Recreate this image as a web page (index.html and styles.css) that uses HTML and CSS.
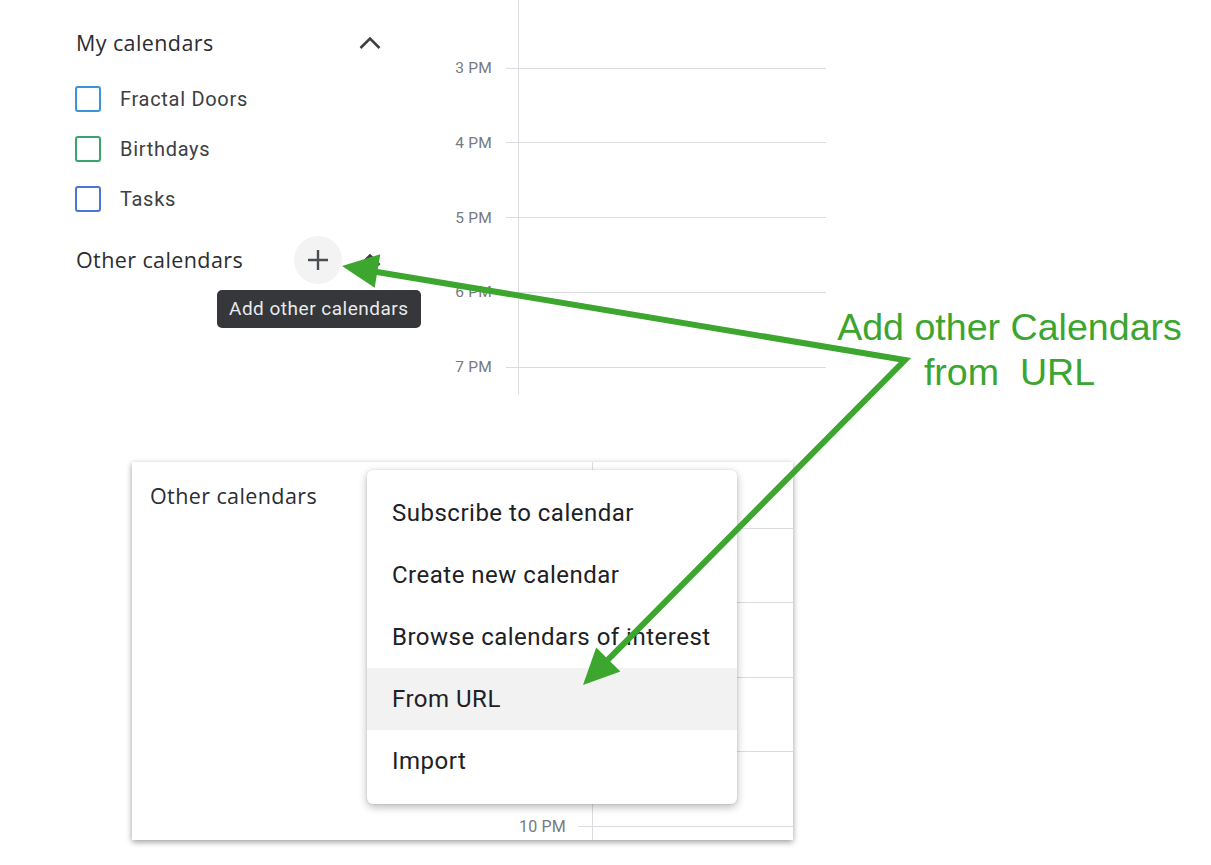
FILE: index.html
```html
<!DOCTYPE html>
<html lang="en">
<head>
<meta charset="UTF-8" />
<meta name="viewport" content="width=device-width, initial-scale=1" />
<title>Other calendars - From URL</title>
<link rel="stylesheet" href="styles.css">
</head>
<body>
<div class="page">
  <section class="top">
    <aside class="sidebar">
      <div class="section-head">
        <span class="section-title">My calendars</span>
        <svg class="chevron" width="24" height="14" viewBox="0 0 24 14" aria-hidden="true">
          <polyline points="2.5,12 12,2.5 21.5,12" />
        </svg>
      </div>
      <ul class="cal-list">
        <li class="cal-item"><span class="check check-sky"></span>Fractal Doors</li>
        <li class="cal-item"><span class="check check-green"></span>Birthdays</li>
        <li class="cal-item"><span class="check check-blue"></span>Tasks</li>
      </ul>
      <div class="section-head other-head">
        <span class="section-title">Other calendars</span>
        <span class="add-btn">
          <svg width="22" height="22" viewBox="0 0 22 22" aria-hidden="true">
            <path d="M11 1v20M1 11h20" />
          </svg>
        </span>
        <svg class="chevron" width="24" height="14" viewBox="0 0 24 14" aria-hidden="true">
          <polyline points="2.5,12 12,2.5 21.5,12" />
        </svg>
        <div class="tooltip">Add other calendars</div>
      </div>
    </aside>

    <div class="hours">
      <div class="hour"><span class="hour-label">3 PM</span><span class="hour-line"></span></div>
      <div class="hour"><span class="hour-label">4 PM</span><span class="hour-line"></span></div>
      <div class="hour"><span class="hour-label">5 PM</span><span class="hour-line"></span></div>
      <div class="hour"><span class="hour-label">6 PM</span><span class="hour-line"></span></div>
      <div class="hour"><span class="hour-label">7 PM</span><span class="hour-line"></span></div>
    </div>
  </section>

  <section class="shot">
    <div class="shot-side"><span class="section-title">Other calendars</span></div>
    <!-- labels for 6–9 PM sit under the menu, so only 10 PM is shown -->
    <div class="hours hours-shot">
      <div class="hour"><span class="hour-label"></span><span class="hour-line"></span></div>
      <div class="hour"><span class="hour-label"></span><span class="hour-line"></span></div>
      <div class="hour"><span class="hour-label"></span><span class="hour-line"></span></div>
      <div class="hour"><span class="hour-label"></span><span class="hour-line"></span></div>
      <div class="hour"><span class="hour-label">10 PM</span><span class="hour-line"></span></div>
    </div>
    <ul class="menu">
      <li>Subscribe to calendar</li>
      <li>Create new calendar</li>
      <li>Browse calendars of interest</li>
      <li class="active">From URL</li>
      <li>Import</li>
    </ul>
  </section>

  <div class="note">Add other Calendars<br>from&nbsp; URL</div>

  <svg class="arrows" width="1211" height="865" viewBox="0 0 1211 865" aria-hidden="true">
    <polyline class="shaft" points="366.6,270.2 905,360 600.6,667.2" />
    <polygon class="head" points="342,266 380.3,254.2 374.7,287.8" />
    <polygon class="head" points="583,685 620.4,671.4 596.2,647.4" />
  </svg>
</div>
</body>
</html>
```

FILE: styles.css
```css
html, body {
  margin: 0;
  padding: 0;
  background: #fff;
  font-family: Roboto, "Noto Sans", Arial, sans-serif;
  color: #3c4043;
}
.page {
  position: relative;
  width: 1211px;
  height: 865px;
  overflow: hidden;
}

/* top: sidebar + day grid */
.top {
  display: flex;
  height: 394px;
}
.sidebar {
  width: 430px;
  box-sizing: border-box;
  padding: 18px 48px 0 76px;
}
.section-head {
  display: flex;
  align-items: center;
  height: 50px;
}
.section-title {
  flex: 1;
  font-family: "Open Sans", Roboto, sans-serif;
  font-size: 21.5px;
  letter-spacing: 0.4px;
  color: #2b2d30;
  line-height: 26px;
  white-space: nowrap;
}
.chevron {
  flex: none;
}
.chevron polyline {
  fill: none;
  stroke: #3c4043;
  stroke-width: 2.6;
}
.cal-list {
  list-style: none;
  margin: 6px 0 0;
  padding: 0;
}
.cal-item {
  display: flex;
  align-items: center;
  gap: 19px;
  height: 50px;
  font-size: 20px;
  letter-spacing: 0.7px;
  color: #3c4043;
}
.check {
  width: 26px;
  height: 26px;
  margin-left: -1px;
  box-sizing: border-box;
  border: 2.5px solid;
  border-radius: 3px;
}
.check-sky { border-color: #3b93d9; }
.check-green { border-color: #39a56c; }
.check-blue { border-color: #4a74d9; }

.other-head {
  position: relative;
  height: 72px;
  gap: 16px;
}
.add-btn {
  flex: none;
  width: 48px;
  height: 48px;
  border-radius: 50%;
  background: #f3f3f4;
  display: flex;
  align-items: center;
  justify-content: center;
}
.add-btn path {
  stroke: #4a4d51;
  stroke-width: 2.4;
}
.tooltip {
  position: absolute;
  left: 141px;
  top: 66px;
  padding: 0 12px;
  height: 38px;
  line-height: 38px;
  border-radius: 5px;
  background: #35373a;
  color: #e8eaed;
  font-size: 19px;
  letter-spacing: 0.5px;
  white-space: nowrap;
}

.hours {
  width: 396px;
  box-sizing: border-box;
  padding-top: 58px;
  display: flex;
  flex-direction: column;
  gap: 54.75px;
  background: linear-gradient(#dadce0, #dadce0) no-repeat 88px 0 / 1px 100%;
}
.hour {
  display: flex;
  align-items: center;
  gap: 14px;
  height: 20px;
}
.hour-label {
  width: 62px;
  text-align: right;
  font-size: 15.5px;
  letter-spacing: 0.2px;
  color: #757a80;
}
.hour-line {
  flex: 1;
  height: 1px;
  background: #dadce0;
}

/* lower screenshot */
.shot {
  position: relative;
  display: flex;
  width: 661px;
  height: 378px;
  margin: 68px 0 0 132px;
  background: #fff;
  box-shadow: 0 2px 6px rgba(0, 0, 0, 0.4);
}
.shot-side {
  width: 380px;
  box-sizing: border-box;
  padding: 21px 18px;
}
.hours-shot {
  width: 281px;
  padding-top: 56px;
  gap: 54.5px;
  background-position: 80px 0;
}
.hours-shot .hour {
  gap: 12px;
}
.hours-shot .hour-label {
  width: 54px;
  font-size: 16px;
}
.menu {
  position: absolute;
  left: 235px;
  top: 8px;
  width: 370px;
  margin: 0;
  padding: 12px 0;
  list-style: none;
  background: #fff;
  border-radius: 6px;
  box-shadow: 0 3px 9px rgba(0, 0, 0, 0.28), 0 0 2px rgba(0, 0, 0, 0.12);
}
.menu li {
  height: 62px;
  line-height: 62px;
  padding-left: 25px;
  font-size: 24px;
  letter-spacing: 0.5px;
  color: #202124;
  white-space: nowrap;
}
.menu li.active {
  background: #f2f2f2;
}

/* annotation */
.note {
  position: absolute;
  left: 837px;
  top: 305px;
  width: 345px;
  text-align: center;
  font-family: "Liberation Sans", Arial, sans-serif;
  font-size: 37.6px;
  line-height: 45px;
  color: #3ba530;
  white-space: nowrap;
}
.arrows {
  position: absolute;
  left: 0;
  top: 0;
  pointer-events: none;
}
.arrows .shaft {
  fill: none;
  stroke: #3ca62f;
  stroke-width: 6;
  stroke-linejoin: miter;
}
.arrows .head {
  fill: #3ca62f;
}
```
